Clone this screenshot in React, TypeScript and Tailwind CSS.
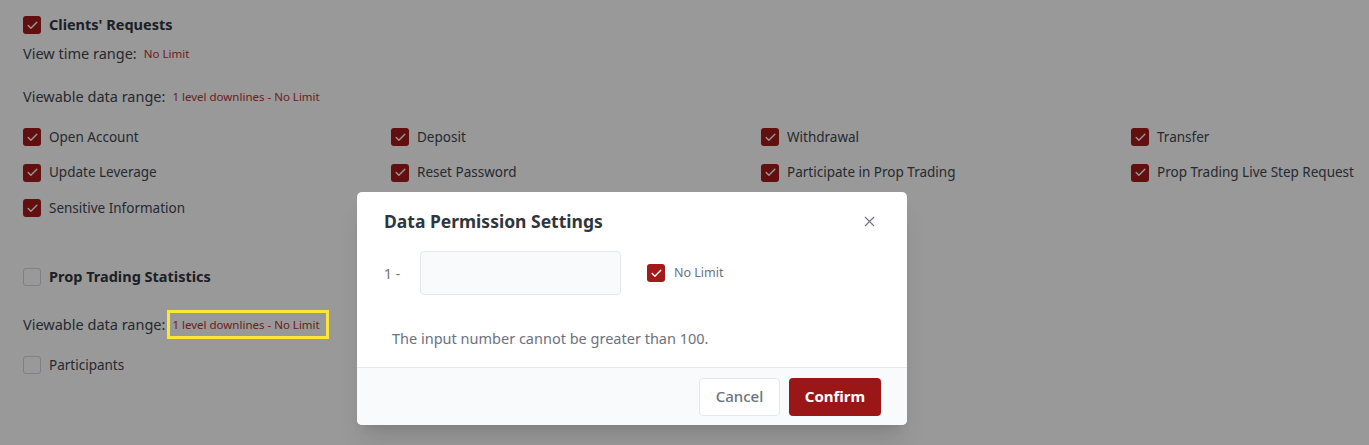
import { X, Check } from 'lucide-react';

const font = { fontFamily: '"Noto Sans", "Open Sans", sans-serif' };

function Box({ checked }: { checked: boolean }) {
  if (!checked) {
    return <span className="w-[18px] h-[18px] rounded-[3px] border border-gray-300 bg-white shrink-0" />;
  }
  return (
    <span className="w-[18px] h-[18px] rounded-[3px] bg-[#a31a1a] flex items-center justify-center shrink-0">
      <Check className="w-[13px] h-[13px] text-white" strokeWidth={2.5} />
    </span>
  );
}

function Item({ label, checked = true }: { label: string; checked?: boolean }) {
  return (
    <div className="flex items-center gap-2 h-[18px]">
      <Box checked={checked} />
      <span className="text-[13.5px] text-[#3f4652] whitespace-nowrap">{label}</span>
    </div>
  );
}

const clientItems = [
  'Open Account',
  'Deposit',
  'Withdrawal',
  'Transfer',
  'Update Leverage',
  'Reset Password',
  'Participate in Prop Trading',
  'Prop Trading Live Step Request',
  'Sensitive Information',
];

export default function App() {
  return (
    <div className="relative w-[1369px] h-[445px] bg-white overflow-hidden" style={font}>
      <div className="px-[23px] pt-[16px]">
        <div className="flex items-center gap-2 h-[18px]">
          <Box checked />
          <span className="text-[14.5px] font-bold text-[#303640]">Clients' Requests</span>
        </div>
        <div className="mt-[10px] h-[20px] flex items-center gap-[7px]">
          <span className="text-[14.5px] text-[#3f4652]">View time range:</span>
          <span className="text-[11.5px] text-[#b8312f]">No Limit</span>
        </div>
        <div className="mt-[23px] h-[20px] flex items-center gap-[7px]">
          <span className="text-[14.5px] text-[#3f4652]">Viewable data range:</span>
          <span className="text-[11.5px] text-[#b8312f]">1 level downlines - No Limit</span>
        </div>
        <div className="mt-[21px] grid grid-cols-[368px_370px_370px_1fr] gap-y-[17.5px]">
          {clientItems.map((l) => (
            <Item key={l} label={l} />
          ))}
        </div>

        <div className="mt-[51px] flex items-center gap-2 h-[18px]">
          <Box checked={false} />
          <span className="text-[14.5px] font-bold text-[#303640]">Prop Trading Statistics</span>
        </div>
        <div className="mt-[29px] h-[20px] flex items-center gap-[7px]">
          <span className="text-[14.5px] text-[#3f4652]">Viewable data range:</span>
          <span className="relative text-[11.5px] text-[#b8312f]">
            1 level downlines - No Limit
            <span className="absolute -left-[5px] -right-[9px] -top-[6px] -bottom-[5px] border-[3px] border-[#fde53b] z-[60]" />
          </span>
        </div>
        <div className="mt-[21px]">
          <Item label="Participants" checked={false} />
        </div>
      </div>

      {/* overlay */}
      <div className="absolute inset-0 bg-black/40 z-40" />

      {/* modal */}
      <div className="absolute left-[357px] top-[192px] w-[550px] h-[233px] bg-white rounded-[5px] shadow-xl z-50 flex flex-col overflow-hidden">
        <div className="flex items-center justify-between pl-[27px] pr-[29px] h-[58px]">
          <span className="text-[17.5px] font-bold text-[#2f353d]">Data Permission Settings</span>
          <X className="w-[17px] h-[17px] text-[#6b7280]" strokeWidth={1.5} />
        </div>
        <div className="flex items-center pl-[27px] mt-[1px]">
          <span className="text-[14px] text-[#6b7280] w-[36px]">1 -</span>
          <div className="w-[201px] h-[44px] rounded-[4px] border border-[#e5e7eb] bg-[#f9fafb]" />
          <div className="flex items-center gap-[9px] ml-[26px]">
            <Box checked />
            <span className="text-[12.5px] text-[#6b7280]">No Limit</span>
          </div>
        </div>
        <div className="pl-[35px] mt-[33px] h-[22px] flex items-center">
          <span className="text-[14.5px] text-[#6b7280]">The input number cannot be greater than 100.</span>
        </div>
        <div className="mt-auto h-[58px] border-t border-[#e5e7eb] bg-[#f9fafb] flex items-center justify-end gap-[9px] pr-[26px]">
          <button className="w-[81px] h-[38px] rounded-[4px] border border-[#e5e7eb] bg-white text-[15px] font-medium text-[#6b7280]">
            Cancel
          </button>
          <button className="w-[92px] h-[38px] rounded-[4px] bg-[#9b1717] text-[15px] font-bold text-white">
            Confirm
          </button>
        </div>
      </div>
    </div>
  );
}
